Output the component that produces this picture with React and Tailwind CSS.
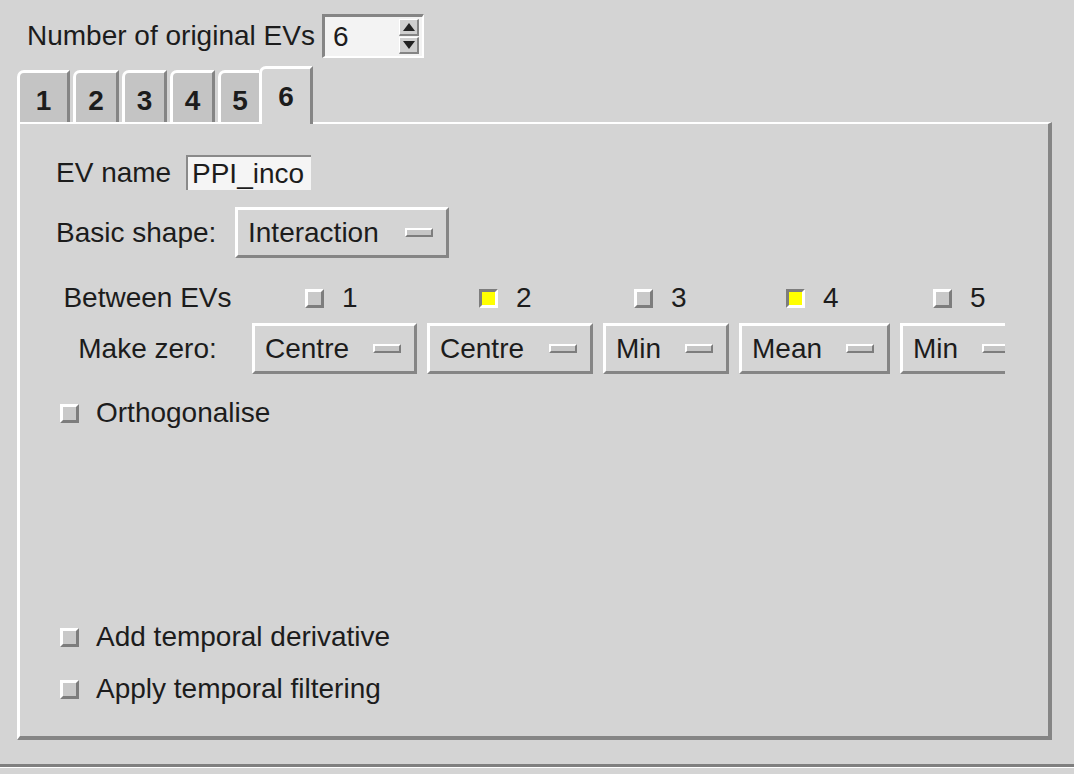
import React from 'react';

const raised = 'border-t-[3px] border-l-[3px] border-b-[3px] border-r-[3px] border-t-white border-l-white border-b-[#858585] border-r-[#858585]';

function Indicator() {
  return (
    <div className="w-[28px] h-[9px] shrink-0 bg-[#c6c6c6] border-t-2 border-l-2 border-t-white border-l-white border-b-2 border-r-2 border-b-[#7d7d7d] border-r-[#7d7d7d]" />
  );
}

function CheckBox({ on }) {
  return on ? (
    <div className="w-[19px] h-[19px] shrink-0 bg-[#ffff00] border-t-[3px] border-l-[3px] border-t-[#7d7d7d] border-l-[#7d7d7d] border-b-[3px] border-r-[3px] border-b-white border-r-white" />
  ) : (
    <div className="w-[19px] h-[19px] shrink-0 bg-[#c9c9c9] border-t-[3px] border-l-[3px] border-t-white border-l-white border-b-[3px] border-r-[3px] border-b-[#7d7d7d] border-r-[#7d7d7d]" />
  );
}

function MenuButton({ label, width, inner }) {
  return (
    <div className="h-[51px] overflow-hidden shrink-0" style={{ width }}>
      <div className={`h-[51px] ${raised} flex items-center justify-between pl-[10px] pr-[13px]`} style={{ width: inner || width }}>
        <span>{label}</span>
        <Indicator />
      </div>
    </div>
  );
}

function Tab({ label, width, active, last }) {
  if (active) {
    return (
      <div className="w-[54px] h-[58px] -mb-[2px] bg-[#d4d4d4] border-t-[3px] border-l-[3px] border-r-[3px] border-t-white border-l-white border-r-[#858585] rounded-tl-[7px] flex justify-center pt-[14px] font-bold relative z-10">
        {label}
      </div>
    );
  }
  return (
    <div
      className={`h-[52px] bg-[#c4c4c4] border-t-[3px] border-l-[3px] border-t-white border-l-white rounded-tl-[7px] flex justify-center pt-[14px] font-bold ${last ? '' : 'border-r-[3px] border-r-[#858585] mr-[3px]'}`}
      style={{ width }}
    >
      {label}
    </div>
  );
}

export default function App() {
  const cols = [
    { n: '1', on: false, label: 'Centre', w: 165, pad: 53 },
    { n: '2', on: true, label: 'Centre', w: 166, pad: 52 },
    { n: '3', on: false, label: 'Min', w: 126, pad: 31 },
    { n: '4', on: true, label: 'Mean', w: 151, pad: 47 },
    { n: '5', on: false, label: 'Min', w: 105, inner: 126, pad: 33 },
  ];

  return (
    <div
      className="w-[1074px] h-[774px] bg-[#d4d4d4] text-[#1c1c1c] text-[28px] leading-none overflow-hidden flex flex-col"
      style={{ fontFamily: '"Liberation Sans", Arial, sans-serif' }}
    >
      {/* top: number of EVs */}
      <div className="flex items-center pl-[27px] pt-[14px] h-[58px]">
        <span className="w-[295px]">Number of original EVs</span>
        <div className="w-[102px] h-[44px] bg-[#f3f3f3] border-t-[3px] border-l-[3px] border-t-[#858585] border-l-[#858585] border-b-2 border-r-2 border-b-white border-r-white flex items-center pl-[8px] pr-[3px]">
          <span className="flex-1">6</span>
          <div className="flex flex-col gap-[1px]">
            <div className="w-[20px] h-[17px] bg-[#cfcfcf] border-t border-l border-white border-b-2 border-r-2 border-b-[#858585] border-r-[#858585] flex items-center justify-center">
              <svg width="12" height="8" viewBox="0 0 12 8"><polygon points="6,0 12,8 0,8" fill="#222" /></svg>
            </div>
            <div className="w-[20px] h-[17px] bg-[#cfcfcf] border-t border-l border-white border-b-2 border-r-2 border-b-[#858585] border-r-[#858585] flex items-center justify-center">
              <svg width="12" height="8" viewBox="0 0 12 8"><polygon points="0,0 12,0 6,8" fill="#222" /></svg>
            </div>
          </div>
        </div>
      </div>

      {/* tabs */}
      <div className="flex items-end pl-[17px] h-[66px] -mt-[2px]">
        <Tab label="1" width={53} />
        <Tab label="2" width={46} />
        <Tab label="3" width={45} />
        <Tab label="4" width={45} />
        <Tab label="5" width={41} last />
        <Tab label="6" active />
      </div>

      {/* panel */}
      <div className="ml-[17px] w-[1035px] h-[618px] border-t-2 border-l-[3px] border-t-white border-l-white border-b-[4px] border-r-[4px] border-b-[#858585] border-r-[#858585] flex flex-col">
        <div className="flex items-center pl-[36px] mt-[31px] h-[35px]">
          <span className="w-[130px]">EV name</span>
          <div className="w-[125px] h-[35px] bg-[#f5f5f5] border-t-2 border-l-2 border-t-[#8a8a8a] border-l-[#8a8a8a] flex items-center pl-[4px]">
            PPI_inco
          </div>
        </div>

        <div className="flex items-center pl-[36px] mt-[17px]">
          <span className="w-[179px]">Basic shape:</span>
          <MenuButton label="Interaction" width={214} />
        </div>

        <div className="flex items-center mt-[25px] h-[30px]">
          <div className="w-[230px] text-center pl-[25px]">Between EVs</div>
          <div className="flex gap-[10px] ml-[2px]">
            {cols.map((c) => (
              <div key={c.n} className="flex items-center gap-[18px]" style={{ width: c.w, paddingLeft: c.pad }}>
                <CheckBox on={c.on} />
                <span>{c.n}</span>
              </div>
            ))}
          </div>
        </div>

        <div className="flex items-center mt-[10px]">
          <div className="w-[230px] text-center pl-[25px]">Make zero:</div>
          <div className="flex gap-[10px] ml-[2px]">
            {cols.map((c) => (
              <MenuButton key={c.n} label={c.label} width={c.w} inner={c.inner} />
            ))}
          </div>
        </div>

        <div className="flex items-center pl-[40px] mt-[24px] h-[30px] gap-[17px]">
          <CheckBox />
          <span>Orthogonalise</span>
        </div>

        <div className="flex items-center pl-[40px] mt-[194px] h-[30px] gap-[17px]">
          <CheckBox />
          <span>Add temporal derivative</span>
        </div>

        <div className="flex items-center pl-[40px] mt-[22px] h-[30px] gap-[17px]">
          <CheckBox />
          <span>Apply temporal filtering</span>
        </div>
      </div>

      <div className="mt-[24px] h-[3px] bg-[#7f7f7f]" />
      <div className="h-[1px] bg-white" />
    </div>
  );
}
